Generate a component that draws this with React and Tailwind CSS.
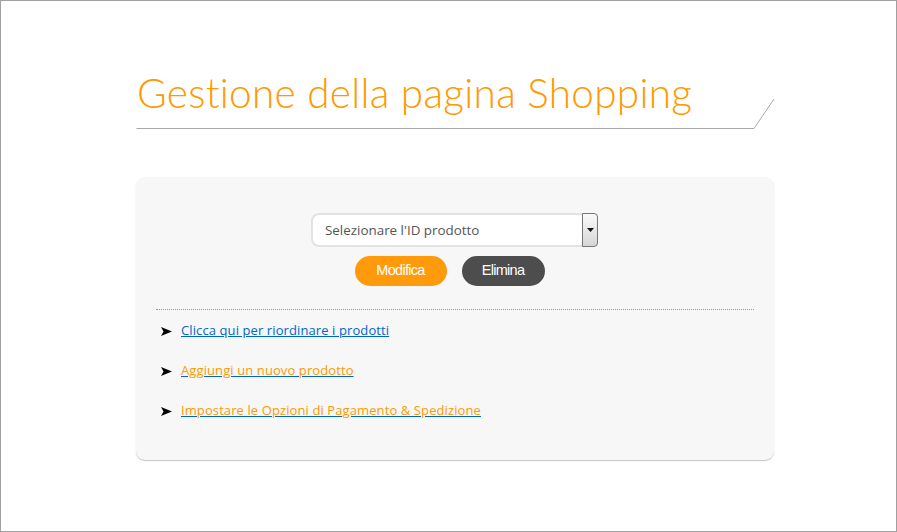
export default function App() {
  return (
    <div className="w-[897px] h-[532px] border border-[#a0a0a0] bg-white" style={{ fontFamily: "Lato, 'Noto Sans', sans-serif" }}>
      <div className="ml-[135px] w-[638px] pt-[68px]">
        <div className="relative h-[59px]">
          <h1 className="text-[40.5px] leading-[48px] font-light text-[#ff9900] pl-[1px] tracking-[0.28px]">Gestione della pagina Shopping</h1>
          <svg className="absolute left-0 top-0" width="640" height="60" viewBox="0 0 640 60">
            <path d="M0.5 59.5 H618 L638 30" fill="none" stroke="#a8a8a8" strokeWidth="1" />
          </svg>
        </div>
        <div className="mt-[49px] h-[283px] rounded-[9px] bg-[#f7f7f7] shadow-[0_1px_1px_#c4c4c4] px-[20px] pt-[36px]" style={{ fontFamily: "'Open Sans', sans-serif" }}>
          <div className="flex justify-center">
            <div className="flex w-[287px] h-[34px] ml-[-1px]">
              <div className="flex-1 flex items-center bg-white rounded-l-[8px] border-2 border-[#e3e3e3] border-r-0 pl-[12px] text-[13.4px] text-[#555]">
                Selezionare l'ID prodotto
              </div>
              <div className="w-[16px] flex items-center justify-center border border-[#777] rounded-r-[4px] bg-gradient-to-b from-[#fafafa] to-[#d6d6d6]">
                <svg width="7" height="4" viewBox="0 0 7 4"><path d="M0 0H7L3.5 4Z" fill="#111" /></svg>
              </div>
            </div>
          </div>
          <div className="flex justify-center gap-[15px] mt-[9px] ml-[-11px]">
            <button className="w-[92px] h-[30px] rounded-full bg-[#ff9a0a] text-white text-[14.5px] tracking-[-0.7px]" style={{ fontFamily: "'Liberation Sans', sans-serif" }}>Modifica</button>
            <button className="w-[83px] h-[30px] rounded-full bg-[#4d4d4d] text-white text-[14.5px] tracking-[-0.7px]" style={{ fontFamily: "'Liberation Sans', sans-serif" }}>Elimina</button>
          </div>
          <div className="mt-[23px] border-t border-dotted border-[#999]"></div>
          <ul className="mt-[11px] pl-[5px] text-[13px] tracking-[0.1px]">
            {[
              ["Clicca qui per riordinare i prodotti", "text-[#0066cc]"],
              ["Aggiungi un nuovo prodotto", "text-[#ff9900]"],
              ["Impostare le Opzioni di Pagamento & Spedizione", "text-[#ff9900]"],
            ].map(([t, c], i) => (
              <li key={i} className={"flex items-center h-[20px] " + (i > 0 ? "mt-[20px]" : "")}>
                <span className="w-[20px] flex items-center">
                  <svg width="11" height="9" viewBox="0 0 11 9"><path d="M0 0L11 4.5L0 9L2.5 4.5Z" fill="#000" /></svg>
                </span>
                <a href="#" className={c + " underline decoration-[#0066cc]"}>{t}</a>
              </li>
            ))}
          </ul>
        </div>
      </div>
    </div>
  );
}
